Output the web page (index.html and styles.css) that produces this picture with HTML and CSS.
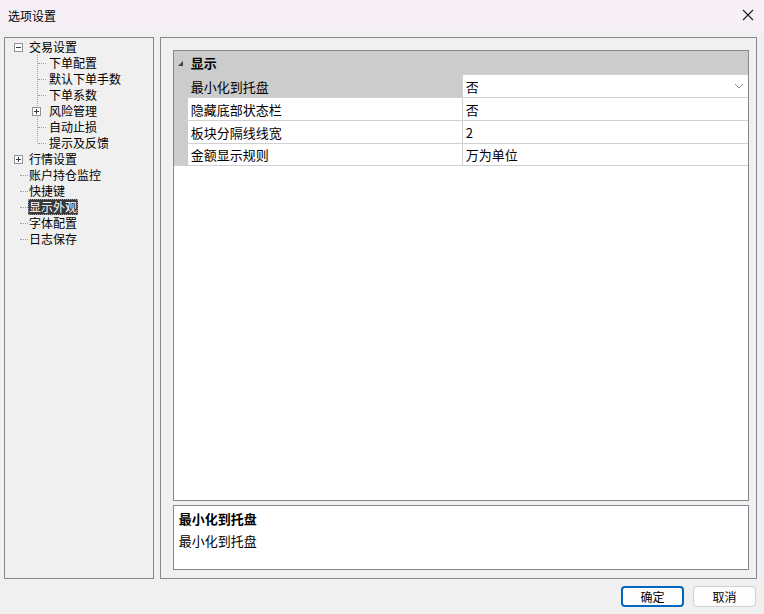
FILE: index.html
```html
<!DOCTYPE html>
<html lang="zh-CN">

<head>
    <meta charset="UTF-8">
    <title>选项设置</title>
    <link rel="stylesheet" href="styles.css">
</head>

<body>
    <div class="window">
        <div class="titlebar">
            <span class="title">选项设置</span>
            <svg class="close" width="12" height="12" viewBox="0 0 12 12">
                <path d="M1 1 L11 11 M11 1 L1 11" stroke="#222" stroke-width="1.2" fill="none" />
            </svg>
        </div>

        <div class="main">
            <!-- left: settings tree -->
            <div class="tree">
                <div class="node l0">
                    <span class="gut g0"><span class="exp minus"></span></span>
                    <span class="lbl">交易设置</span>
                </div>
                <div class="kids">
                    <div class="node l1"><span class="gut g1"><span class="dash"></span></span><span class="lbl">下单配置</span></div>
                    <div class="node l1"><span class="gut g1"><span class="dash"></span></span><span class="lbl">默认下单手数</span></div>
                    <div class="node l1"><span class="gut g1"><span class="dash"></span></span><span class="lbl">下单系数</span></div>
                    <div class="node l1"><span class="gut g1e"><span class="exp plus"></span></span><span class="lbl">风险管理</span></div>
                    <div class="node l1"><span class="gut g1"><span class="dash"></span></span><span class="lbl">自动止损</span></div>
                    <div class="node l1"><span class="gut g1"><span class="dash"></span></span><span class="lbl">提示及反馈</span></div>
                </div>
                <div class="node l0">
                    <span class="gut g0"><span class="exp plus"></span></span>
                    <span class="lbl">行情设置</span>
                </div>
                <div class="node l0"><span class="gut g0d"><span class="dash"></span></span><span class="lbl">账户持仓监控</span></div>
                <div class="node l0"><span class="gut g0d"><span class="dash"></span></span><span class="lbl">快捷键</span></div>
                <div class="node l0"><span class="gut g0d"><span class="dash"></span></span><span class="lbl selected">显示外观</span></div>
                <div class="node l0"><span class="gut g0d"><span class="dash"></span></span><span class="lbl">字体配置</span></div>
                <div class="node l0"><span class="gut g0d"><span class="dash"></span></span><span class="lbl">日志保存</span></div>
            </div>

            <!-- right: property grid -->
            <div class="content">
                <div class="grid">
                    <div class="cat">
                        <span class="tri"></span>
                        <span>显示</span>
                    </div>
                    <div class="row sel">
                        <div class="gutter"></div>
                        <div class="name">最小化到托盘</div>
                        <div class="val">否
                            <svg class="chev" width="10" height="6" viewBox="0 0 10 6">
                                <path d="M1 1 L5 5 L9 1" stroke="#8a8a8a" stroke-width="1" fill="none" />
                            </svg>
                        </div>
                    </div>
                    <div class="row">
                        <div class="gutter"></div>
                        <div class="name">隐藏底部状态栏</div>
                        <div class="val">否</div>
                    </div>
                    <div class="row">
                        <div class="gutter"></div>
                        <div class="name">板块分隔线线宽</div>
                        <div class="val">2</div>
                    </div>
                    <div class="row">
                        <div class="gutter"></div>
                        <div class="name">金额显示规则</div>
                        <div class="val">万为单位</div>
                    </div>
                </div>
                <div class="desc">
                    <div class="desc-title">最小化到托盘</div>
                    <div class="desc-text">最小化到托盘</div>
                </div>
            </div>
        </div>

        <div class="footer">
            <button class="btn primary">确定</button>
            <button class="btn">取消</button>
        </div>
    </div>
</body>

</html>
```

FILE: styles.css
```css
* {
    margin: 0;
    padding: 0;
    box-sizing: border-box;
}

body {
    width: 764px;
    height: 614px;
    background: #f0f0f0;
    font-family: "Microsoft YaHei", "Noto Sans CJK SC", "Noto Sans", sans-serif;
    font-size: 12px;
    color: #000;
    overflow: hidden;
}

.window {
    display: flex;
    flex-direction: column;
    height: 614px;
}

.titlebar {
    height: 30px;
    background: #f6eff6;
    display: flex;
    align-items: center;
    justify-content: space-between;
    padding: 0 10px 0 8px;
}

.title {
    font-size: 12px;
}

.main {
    display: flex;
    gap: 6px;
    padding: 7px 7px 0 4px;
    height: 549px;
}

/* tree */
.tree {
    width: 150px;
    height: 542px;
    border: 1px solid #828790;
    background: #f0f0f0;
    padding-top: 1px;
}

.node {
    display: flex;
    align-items: center;
    height: 16px;
    line-height: 16px;
}

.gut {
    display: flex;
    align-items: center;
    flex-shrink: 0;
}

.g0 {
    width: 23px;
    padding-left: 9px;
}

.g0d {
    width: 23px;
    padding-left: 15px;
}

.g1 {
    width: 43px;
    padding-left: 33px;
}

.g1e {
    width: 43px;
    padding-left: 27px;
}

.dash {
    width: 8px;
    border-top: 1px dotted #a0a0a0;
}

.kids {
    background: repeating-linear-gradient(to bottom, #a0a0a0 0 1px, transparent 1px 2px) 32px 0 / 1px calc(100% - 8px) no-repeat;
}

.exp {
    width: 9px;
    height: 9px;
    border: 1px solid #919191;
    background: #fff;
    position: relative;
}

.exp::before {
    content: "";
    position: absolute;
    left: 1px;
    top: 3px;
    width: 5px;
    height: 1px;
    background: #3a3a3a;
}

.plus::after {
    content: "";
    position: absolute;
    left: 3px;
    top: 1px;
    width: 1px;
    height: 5px;
    background: #3a3a3a;
}

.lbl {
    padding: 0 1px;
    white-space: nowrap;
}

.selected {
    background: #383838;
    color: #fff;
    outline: 1px dotted #999;
    outline-offset: -1px;
}

/* right side */
.content {
    width: 598px;
    height: 542px;
    border: 1px solid #828790;
    padding: 12px 7px 8px 12px;
    display: flex;
    flex-direction: column;
    gap: 4px;
}

.grid {
    flex-shrink: 0;
    height: 451px;
    border: 1px solid #828790;
    background: #fff;
    font-size: 13px;
}

.cat {
    height: 23px;
    background: #cccccc;
    display: flex;
    align-items: center;
    font-weight: bold;
}

.tri {
    width: 0;
    height: 0;
    border-left: 5px solid transparent;
    border-bottom: 5px solid #444;
    margin: 1px 8px 0 4px;
}

.row {
    display: flex;
    height: 23px;
    border-top: 1px solid #d0d0d0;
}

.row:first-of-type {
    border-top: none;
}

.row:last-child {
    border-bottom: 1px solid #d0d0d0;
}

.gutter {
    width: 14px;
    background: #cccccc;
}

.name {
    width: 275px;
    border-right: 1px solid #d0d0d0;
    padding-left: 3px;
    display: flex;
    align-items: center;
}

.sel .name {
    background: #cccccc;
}

.val {
    flex: 1;
    padding-left: 3px;
    display: flex;
    align-items: center;
}

.chev {
    margin-left: auto;
    margin-right: 4px;
}

.desc {
    flex-shrink: 0;
    height: 65px;
    border: 1px solid #828790;
    background: #fff;
    padding: 4px 5px;
    font-size: 13px;
}

.desc-title {
    font-weight: bold;
    line-height: 18px;
}

.desc-text {
    line-height: 18px;
    margin-top: 4px;
}

/* buttons */
.footer {
    display: flex;
    justify-content: flex-end;
    gap: 9px;
    padding: 7px 8px 0 0;
}

.btn {
    width: 63px;
    height: 21px;
    border: 1px solid #d0d0d0;
    border-radius: 4px;
    background: #fdfdfd;
    font-family: "Microsoft YaHei", "Noto Sans CJK SC", sans-serif;
    font-size: 12px;
    color: #000;
}

.primary {
    border: 2px solid #0067c0;
    background: #fdfdfd;
}
```
